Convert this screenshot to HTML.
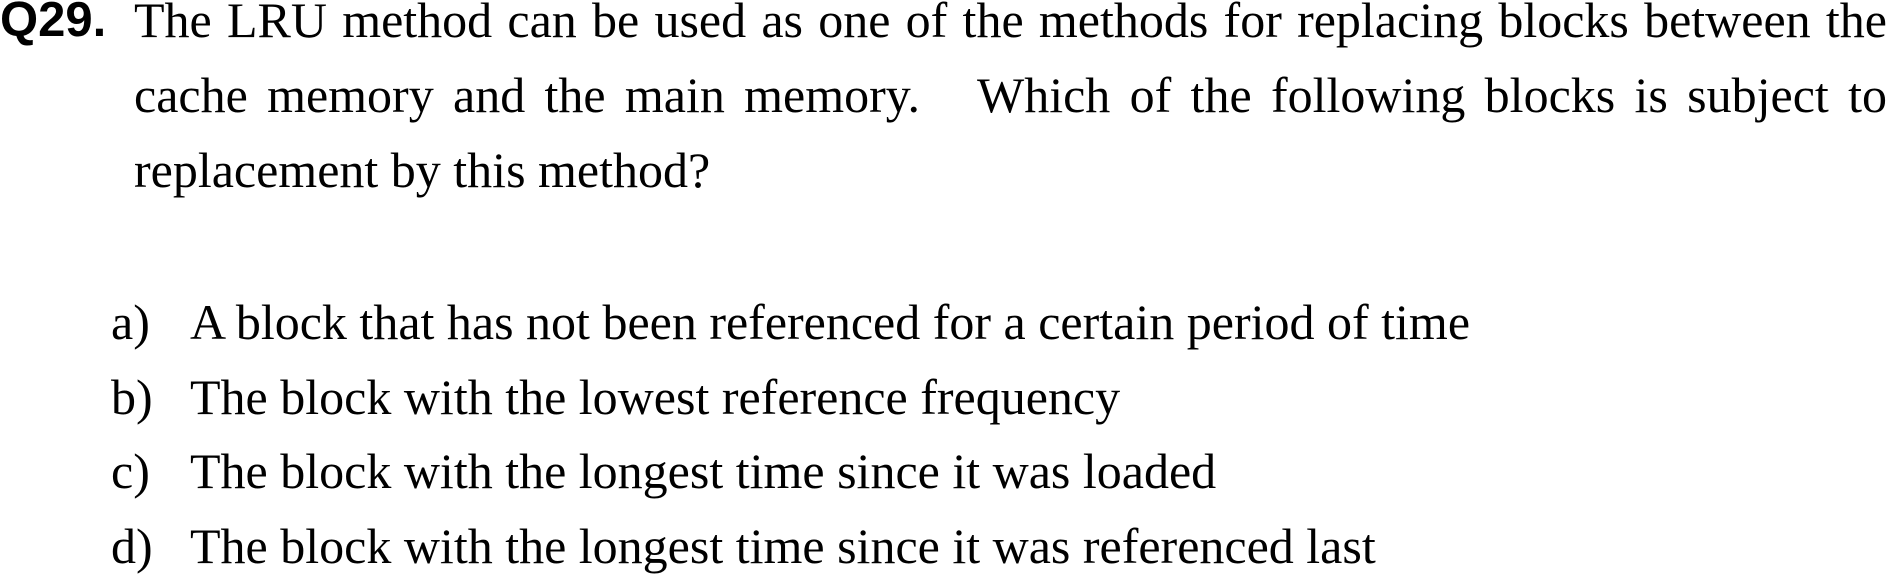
<!DOCTYPE html>
<html><head><meta charset="utf-8"><style>
html,body{margin:0;padding:0;background:#fff;}
body{width:1887px;height:572px;position:relative;overflow:hidden;font-family:"Liberation Serif",serif;color:#000;}
.q{position:absolute;left:0;font-family:"Liberation Sans",sans-serif;font-weight:bold;font-size:49px;letter-spacing:0;line-height:52px;top:-6px;}
.l{position:absolute;font-size:50px;line-height:60px;white-space:nowrap;}
.j{left:134px;width:1753px;text-align:justify;text-align-last:justify;white-space:normal;}
.o{left:111px;}
.o span{position:absolute;left:79px;}
</style></head><body>
<div class="q">Q29.</div>
<div class="l j" style="top:-10px">The LRU method can be used as one of the methods for replacing blocks between the</div>
<div class="l j" style="top:65px">cache memory and the main memory.&nbsp;&nbsp; Which of the following blocks is subject to</div>
<div class="l" style="left:134px;top:140px">replacement by this method?</div>
<div class="l o" style="top:292px">a)<span>A block that has not been referenced for a certain period of time</span></div>
<div class="l o" style="top:367px">b)<span>The block with the lowest reference frequency</span></div>
<div class="l o" style="top:441px">c)<span>The block with the longest time since it was loaded</span></div>
<div class="l o" style="top:516px">d)<span>The block with the longest time since it was referenced last</span></div>
</body></html>
